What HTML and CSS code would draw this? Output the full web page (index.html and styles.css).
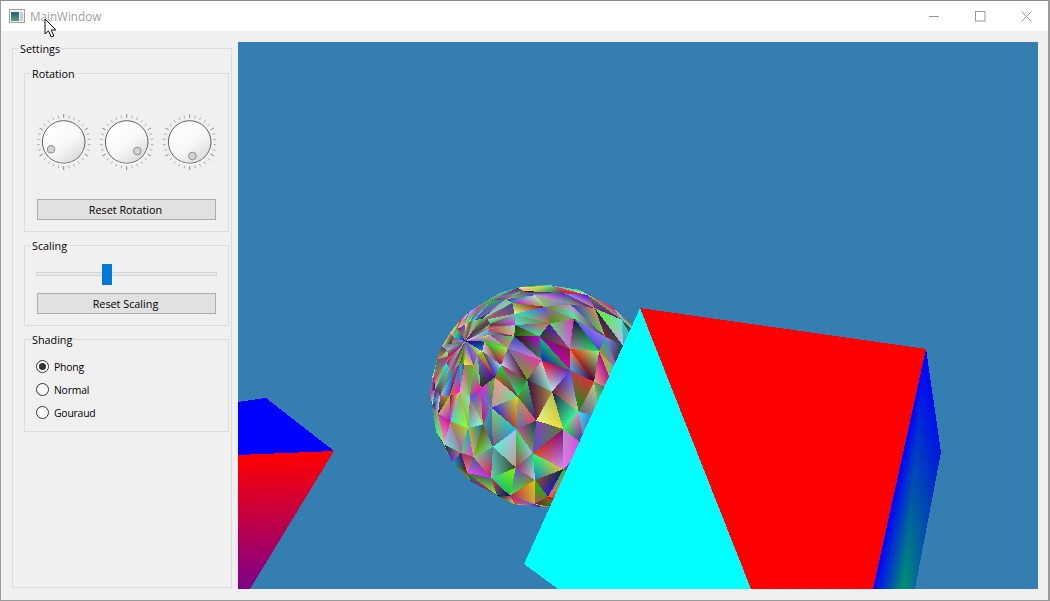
FILE: index.html
```html
<!DOCTYPE html>
<html lang="en">
<head>
<meta charset="utf-8">
<title>MainWindow</title>
<link rel="stylesheet" href="styles.css">
</head>
<body>
<div class="window">
  <header class="titlebar">
    <svg class="app-icon" width="16" height="14" viewBox="0 0 16 14">
      <defs><linearGradient id="pane" x1="0" y1="0" x2="0" y2="1"><stop offset="0" stop-color="#1f5f78"/><stop offset="1" stop-color="#5f9a80"/></linearGradient></defs>
      <rect x="0.5" y="0.5" width="15" height="13" fill="#f0f0f0" stroke="#a0a0a0"/>
      <rect x="2" y="3" width="8" height="9" fill="url(#pane)"/>
      <rect x="11" y="3" width="3" height="9" fill="#c4d0d0"/>
    </svg>
    <span class="title">MainWindow</span>
    <div class="caption-buttons">
      <svg width="11" height="11" viewBox="0 0 11 11"><path d="M0 5.5H10" stroke="#999" fill="none"/></svg>
      <svg width="11" height="11" viewBox="0 0 11 11"><rect x="0.5" y="0.5" width="9.5" height="9.5" stroke="#999" fill="none"/></svg>
      <svg width="11" height="11" viewBox="0 0 11 11"><path d="M0.5 0.5L10.5 10.5M10.5 0.5L0.5 10.5" stroke="#999" fill="none"/></svg>
    </div>
  </header>
  <svg class="cursor" width="14" height="21" viewBox="0 0 14 21">
    <path d="M1 1V16L4.5 12.8L7.2 19L9.8 18L7.2 12H12Z" fill="#fff" stroke="#111" stroke-width="1"/>
  </svg>
  <main class="content">
    <section class="group settings">
      <span class="group-title">Settings</span>
      <section class="group rotation">
        <span class="group-title">Rotation</span>
        <div class="dials">
          <canvas class="dial" width="60" height="60" data-hx="-12.7" data-hy="7.3"></canvas>
          <canvas class="dial" width="60" height="60" data-hx="10.6" data-hy="9"></canvas>
          <canvas class="dial" width="60" height="60" data-hx="2.7" data-hy="14"></canvas>
        </div>
        <button class="btn" type="button">Reset Rotation</button>
      </section>
      <section class="group scaling">
        <span class="group-title">Scaling</span>
        <div class="slider"><div class="track"></div><div class="handle"></div></div>
        <button class="btn" type="button">Reset Scaling</button>
      </section>
      <section class="group shading">
        <span class="group-title">Shading</span>
        <div class="radio"><span class="dot checked"></span>Phong</div>
        <div class="radio"><span class="dot"></span>Normal</div>
        <div class="radio"><span class="dot"></span>Gouraud</div>
      </section>
    </section>
    <canvas id="view" class="view" width="800" height="547"></canvas>
  </main>
</div>
<script src="script.js"></script>
</body>
</html>
```
FILE: styles.css
```css
* { box-sizing: border-box; }
html, body { margin: 0; height: 100%; overflow: hidden; background: #999; }
body { font: 10.8px/16px "Open Sans", "Noto Sans", sans-serif; color: #000; }
.window { position: relative; width: 1047px; height: 600px; margin-left: 1px; border-top: 1px solid #8a8a8a; display: flex; flex-direction: column; background: #f0f0f0; }
.titlebar { height: 30px; background: #fff; display: flex; align-items: center; padding-left: 8px; flex: none; }
.app-icon { margin-right: 5px; }
.title { color: #9ba0a6; font-size: 11.7px; }
.caption-buttons { margin-left: auto; display: flex; gap: 35px; padding-right: 16px; }
.cursor { position: absolute; left: 43px; top: 17px; }
.content { flex: 1; display: flex; align-items: flex-start; padding: 11px 9px 0 11px; gap: 6px; }
.group { position: relative; border: 1px solid #dcdcdc; }
.group-title { position: absolute; left: 6px; top: -8px; padding: 0 1px; background: #f0f0f0; white-space: nowrap; }
.settings { width: 220px; height: 540px; margin-top: 6px; padding: 24px 2px 0 11px; display: flex; flex-direction: column; }
.rotation { height: 159px; padding: 38px 12px 0; margin-bottom: 13px; }
.dials { display: flex; margin-left: -3px; height: 60px; margin-bottom: 27px; gap: 3px; }
.dial { width: 60px; height: 60px; flex: none; }
.btn { display: block; width: 179px; height: 21px; padding: 0 2px 0 0; background: #e1e1e1; border: 1px solid #adadad; font: inherit; color: #000; }
.scaling { height: 81px; padding: 18px 12px 0; margin-bottom: 13px; }
.slider { position: relative; height: 21px; margin: 0 -1px 8px; }
.track { position: absolute; left: 0; right: 0; top: 8px; height: 4px; background: #e7eaea; border: 1px solid #d6d6d6; }
.handle { position: absolute; left: 66px; top: 0; width: 10px; height: 21px; background: #0078d7; }
.shading { height: 93px; padding: 15px 11px 0; }
.radio { height: 23px; display: flex; align-items: center; gap: 5px; font-size: 10.4px; letter-spacing: -0.2px; }
.dot { width: 13px; height: 13px; border: 1px solid #333; border-radius: 50%; background: #fff; display: flex; align-items: center; justify-content: center; flex: none; }
.dot.checked::after { content: ""; width: 7px; height: 7px; border-radius: 50%; background: #333; }
.view { width: 800px; height: 547px; flex: none; display: block; }
```
FILE: script.js
```js
(function () {
  // ---- dials ----
  document.querySelectorAll('.dial').forEach(function (c) {
    var g = c.getContext('2d'), cx = 29.7, cy = 30, r = 21.3;
    g.lineWidth = 1;
    for (var i = 0; i < 30; i++) {
      var a = i * Math.PI / 15 + Math.PI / 2, long = i % 5 === 0;
      var r0 = 24.2, r1 = long ? 28 : 26.8;
      g.strokeStyle = long ? '#888' : '#aaa';
      g.beginPath();
      g.moveTo(cx + Math.cos(a) * r0, cy + Math.sin(a) * r0);
      g.lineTo(cx + Math.cos(a) * r1, cy + Math.sin(a) * r1);
      g.stroke();
    }
    var f = g.createLinearGradient(cx - 12, cy - 15, cx + 14, cy + 17);
    f.addColorStop(0, '#ffffff'); f.addColorStop(0.55, '#f7f7f7'); f.addColorStop(1, '#dcdcdc');
    g.fillStyle = f;
    g.strokeStyle = '#606060';
    g.beginPath(); g.arc(cx, cy, r, 0, Math.PI * 2); g.fill(); g.stroke();
    g.strokeStyle = '#ffffff';
    g.beginPath(); g.arc(cx, cy, r + 1, 0.3, 2.2); g.stroke();
    var hx = cx + parseFloat(c.dataset.hx), hy = cy + parseFloat(c.dataset.hy);
    g.fillStyle = '#d4d4d4';
    g.strokeStyle = '#8f8f8f';
    g.beginPath(); g.arc(hx, hy, 3.8, 0, Math.PI * 2); g.fill(); g.stroke();
  });

  // ---- 3D viewport, rasterised without antialiasing ----
  var cv = document.getElementById('view'), ctx = cv.getContext('2d');
  var W = cv.width, H = cv.height, OX = 238, OY = 42;
  var img = ctx.createImageData(W, H), d = img.data;
  for (var i = 0; i < W * H; i++) {
    d[i * 4] = 0x34; d[i * 4 + 1] = 0x7e; d[i * 4 + 2] = 0xb2; d[i * 4 + 3] = 255;
  }
  function tri(a, b, c, ca, cb, cc) {
    var ax = a[0] - OX, ay = a[1] - OY, bx = b[0] - OX, by = b[1] - OY, cx = c[0] - OX, cy = c[1] - OY;
    var area = (bx - ax) * (cy - ay) - (by - ay) * (cx - ax);
    if (!area) return;
    var x0 = Math.max(0, Math.floor(Math.min(ax, bx, cx))), x1 = Math.min(W - 1, Math.ceil(Math.max(ax, bx, cx)));
    var y0 = Math.max(0, Math.floor(Math.min(ay, by, cy))), y1 = Math.min(H - 1, Math.ceil(Math.max(ay, by, cy)));
    for (var y = y0; y <= y1; y++) for (var x = x0; x <= x1; x++) {
      var px = x + 0.5, py = y + 0.5;
      var w0 = ((bx - px) * (cy - py) - (by - py) * (cx - px)) / area;
      var w1 = ((cx - px) * (ay - py) - (cy - py) * (ax - px)) / area;
      var w2 = 1 - w0 - w1;
      if (w0 < 0 || w1 < 0 || w2 < 0) continue;
      var o = (y * W + x) * 4;
      d[o] = w0 * ca[0] + w1 * cb[0] + w2 * cc[0];
      d[o + 1] = w0 * ca[1] + w1 * cb[1] + w2 * cc[1];
      d[o + 2] = w0 * ca[2] + w1 * cb[2] + w2 * cc[2];
    }
  }
  // sphere: irregular latitude/longitude mesh with random colours per corner
  var seed = 20231;
  function rnd() { seed = (seed * 1664525 + 1013904223) >>> 0; return (seed >>> 8) / 16777216; }
  function rc() { return [rnd() * 255, rnd() * 255, rnd() * 255]; }
  var SX = 544, SY = 396, RX = 114, RY = 112;
  var px = -0.69, py = -0.49, pz = Math.sqrt(1 - px * px - py * py);
  var ux = pz, uy = 0, uz = -px, ul = Math.hypot(ux, uz); ux /= ul; uz /= ul;
  var vx = py * uz - pz * uy, vy = pz * ux - px * uz, vz = px * uy - py * ux;
  var LAT = 12, LON = 22, jit = [];
  for (var i = 0; i <= LAT; i++) {
    jit.push([]);
    for (var j = 0; j < LON; j++) jit[i].push([(rnd() - 0.5) * 0.1, (rnd() - 0.5) * 0.13]);
  }
  function pt(i, j) {
    var k = jit[i][j % LON], edge = i === 0 || i === LAT;
    var t = i * Math.PI / LAT + (edge ? 0 : k[0]), f = j * 2 * Math.PI / LON + k[1];
    var s = Math.sin(t), co = Math.cos(t), cf = Math.cos(f), sf = Math.sin(f);
    return [SX + RX * (co * px + s * cf * ux + s * sf * vx),
            SY + RY * (co * py + s * cf * uy + s * sf * vy),
            co * pz + s * cf * uz + s * sf * vz];
  }
  var faces = [];
  for (var i = 0; i < LAT; i++) for (var j = 0; j < LON; j++) {
    var a = pt(i, j), b = pt(i + 1, j), c = pt(i + 1, j + 1), e = pt(i, j + 1);
    faces.push([a, b, c, rc(), rc(), rc()]);
    faces.push([a, c, e, rc(), rc(), rc()]);
  }
  faces.sort(function (p, q) { return (p[0][2] + p[1][2] + p[2][2]) - (q[0][2] + q[1][2] + q[2][2]); });
  faces.forEach(function (t) { tri(t[0], t[1], t[2], t[3], t[4], t[5]); });

  var RED = [255, 0, 0], BLUE = [0, 0, 255], CY = [0, 255, 255];
  function flat(pts, col) { for (var i = 1; i < pts.length - 1; i++) tri(pts[0], pts[i], pts[i + 1], col, col, col); }
  // left object
  flat([[238, 402], [266, 398], [334, 451], [238, 455]], BLUE);
  tri([334, 451], [238, 455], [238, 589], RED, RED, [128, 0, 140]);
  tri([334, 451], [238, 589], [250, 589], RED, [128, 0, 140], [125, 0, 135]);
  // right blue side
  var G = [0, 146, 110];
  tri([926, 349], [903, 589], [873, 589], BLUE, G, BLUE);
  tri([926, 349], [941, 452], [903, 589], BLUE, [0, 20, 225], G);
  tri([941, 452], [915, 589], [903, 589], [0, 20, 225], [5, 110, 150], G);
  // big faces
  flat([[640, 308], [926, 349], [873, 589], [751, 589]], RED);
  flat([[640, 308], [751, 589], [558, 589], [524, 564]], CY);
  ctx.putImageData(img, 0, 0);
})();
```
